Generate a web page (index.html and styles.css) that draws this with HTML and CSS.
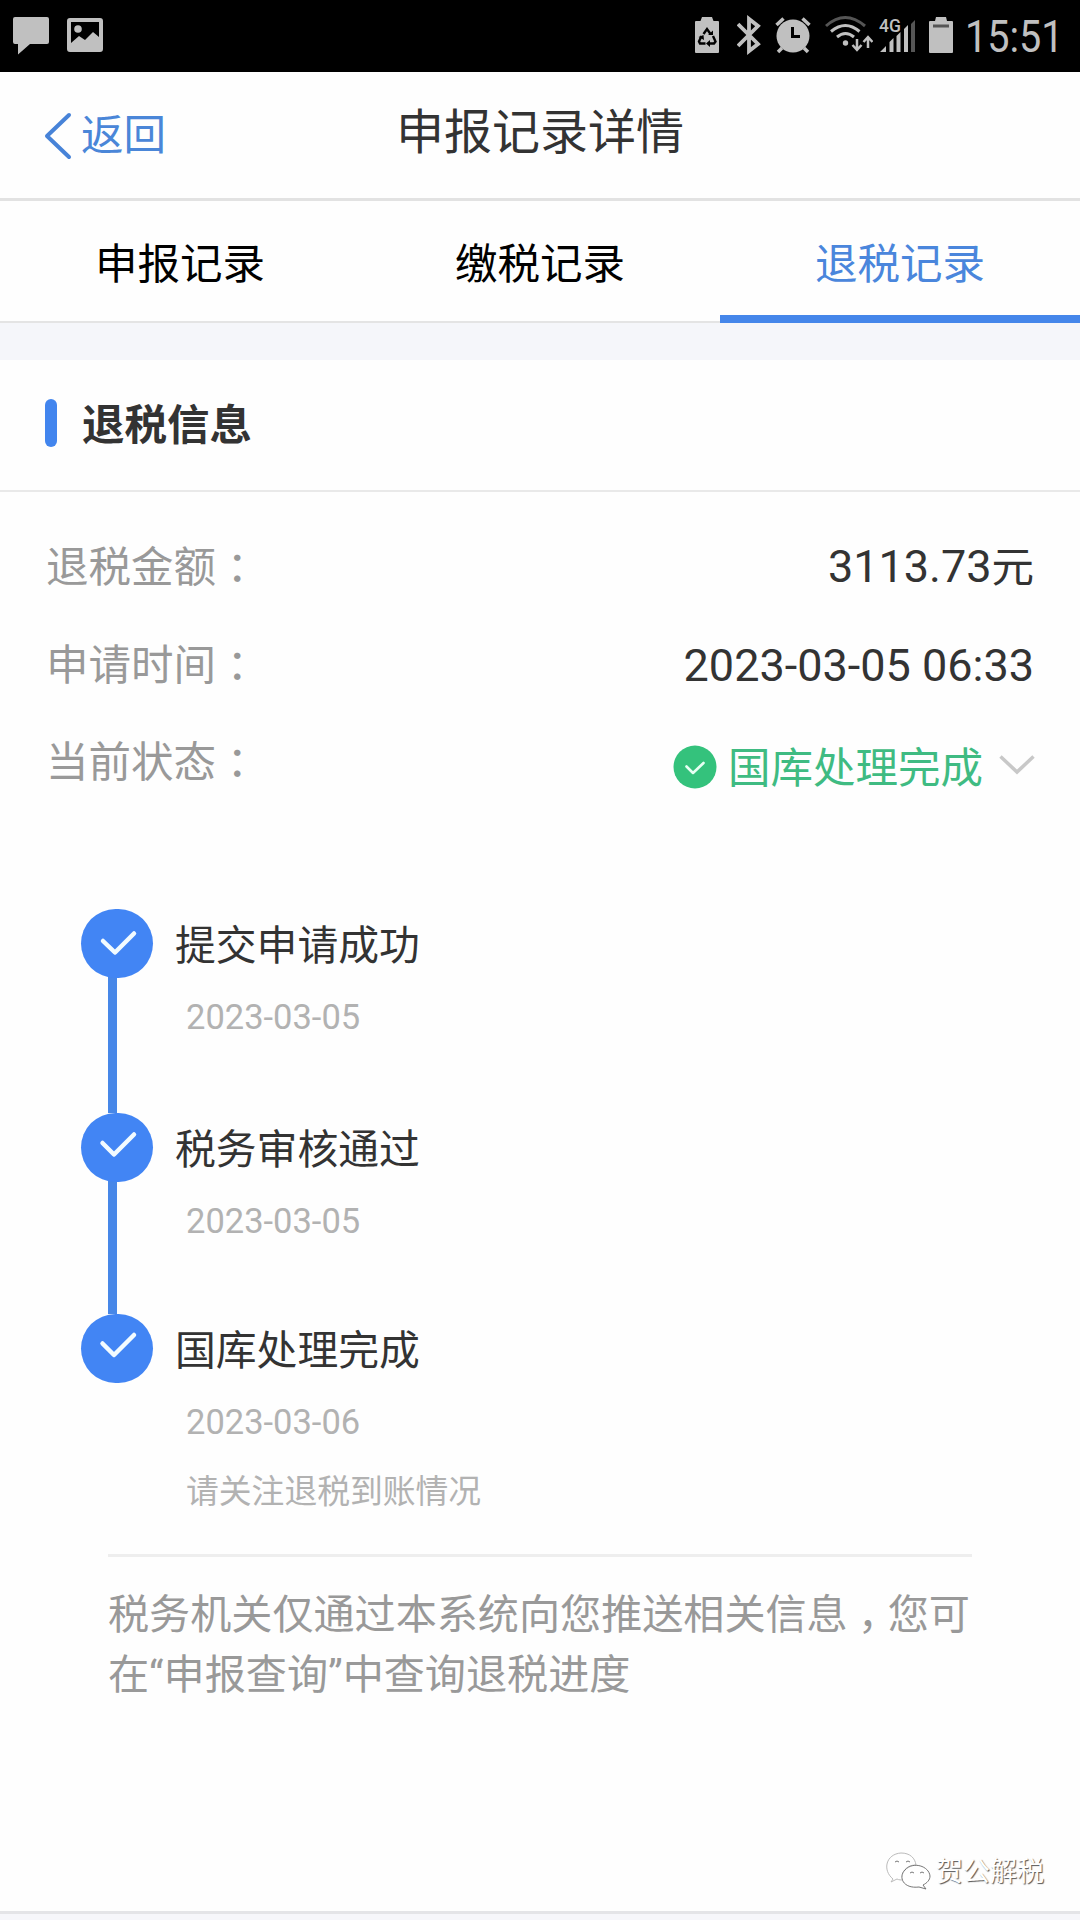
FILE: index.html
```html
<!DOCTYPE html>
<html lang="zh-CN">

<head>
    <meta charset="UTF-8">
    <meta name="viewport" content="width=device-width, initial-scale=1.0">
    <title>申报记录详情</title>
    <link rel="stylesheet" href="styles.css">
</head>

<body>

    <div class="status-bar">
        <svg class="icon-message" width="36" height="72" viewBox="0 0 36 72" fill="#c0c0c0">
            <path d="M2 17h32a2 2 0 0 1 2 2v23a2 2 0 0 1-2 2H17L5 54.500V44H2a2 2 0 0 1-2-2V19a2 2 0 0 1 2-2z"/>
        </svg>
        <svg class="icon-picture" width="36" height="72" viewBox="0 0 36 72" fill="#c0c0c0">
            <path fill-rule="evenodd" d="M3 18h30a3 3 0 0 1 3 3v28a3 3 0 0 1-3 3H3a3 3 0 0 1-3-3V21a3 3 0 0 1 3-3zM4 22v21l8-7 6 4 8-8 6 5V22z"/>
            <circle cx="11" cy="29" r="3.800"/>
        </svg>

        <div class="status-right">
            <svg class="icon-saver" width="24" height="72" viewBox="0 0 24 72">
                <path fill="#c0c0c0" d="M7 17h10l1.500 4H23a1 1 0 0 1 1 1v30a1 1 0 0 1-1 1H1a1 1 0 0 1-1-1V22a1 1 0 0 1 1-1h4.500z"/>
                <path d="M8.500 34l3.500-5 3.500 5M18 36l2.500 5.500-1.500 2h-5M10.500 43.500H5l-1-2L6.500 36" fill="none" stroke="#000" stroke-width="2.400"/>
                <path d="M13 35h5v-4.500zM15 40v7l-4-3.500zM3.500 37l5-2 .5 5z" fill="#000"/>
            </svg>
            <svg class="icon-bluetooth" width="24" height="72" viewBox="0 0 24 72" fill="none" stroke="#c0c0c0" stroke-width="3.800">
                <path d="M1 24l20 20-9 7V19l9 7L1 46"/>
            </svg>
            <svg class="icon-alarm" width="36" height="72" viewBox="0 0 36 72">
                <circle cx="18" cy="36" r="16.500" fill="#c0c0c0"/>
                <path d="M1.500 25l7-6.500M27.500 18.500l7 6.500M7 48l-4 4M29 48l4 4" fill="none" stroke="#c0c0c0" stroke-width="3.500"/>
                <path d="M17.500 27v9.500h7.500" fill="none" stroke="#000" stroke-width="3"/>
            </svg>
            <svg class="icon-wifi" width="48" height="72" viewBox="0 0 48 72" fill="none" stroke="#c0c0c0" stroke-width="3">
                <path d="M1 26q19-17 39 0" stroke="#555"/>
                <path d="M6 31.500q14.500-12 28.500 0M12 37q8.500-7 17 0"/>
                <circle cx="20.500" cy="43" r="2.700" fill="#c0c0c0" stroke="none"/>
                <path d="M32 39v10M27.500 45l4.500 5 4.500-5M43 48V38M38.500 42l4.500-5 4.500 5" stroke-width="2.500"/>
            </svg>
            <svg class="icon-signal" width="37" height="72" viewBox="0 0 37 72" fill="#c0c0c0">
                <text class="network" x="0" y="32">4G</text>
                <path d="M1 52l6-6v6zM10.500 42l4-4v14h-4zM17.500 36l4-4v20h-4zM25 29l4-4v27h-4z"/>
                <path d="M32 24l4-4v32h-4z" fill="#555"/>
            </svg>
            <svg class="icon-battery" width="24" height="72" viewBox="0 0 24 72">
                <path fill="#c0c0c0" d="M7 17h10l1 4h5a1 1 0 0 1 1 1v30a1 1 0 0 1-1 1H1a1 1 0 0 1-1-1V22a1 1 0 0 1 1-1h5z"/>
                <path d="M4 24.500h16v3H4z" fill="#555"/>
            </svg>
            <span class="time">15:51</span>
        </div>
    </div>

    <header class="header">
        <a class="back">
            <svg width="28" height="48" viewBox="0 0 28 48" fill="none" stroke="#4783d8" stroke-width="4" stroke-linecap="round" stroke-linejoin="round">
                <path d="M25 3L3 24l22 21"/>
            </svg>
            <span>返回</span>
        </a>
        <h1>申报记录详情</h1>
    </header>

    <nav class="tabs">
        <div class="tab">申报记录</div>
        <div class="tab">缴税记录</div>
        <div class="tab active">退税记录</div>
    </nav>

    <main class="content">
        <h2 class="section-title"><span>退税信息</span></h2>

        <div class="info">
            <div class="row">
                <span class="label">退税金额<span class="colon" lang="zh-TW">：</span></span>
                <span class="value">3113.73<span class="unit">元</span></span>
            </div>
            <div class="row">
                <span class="label">申请时间<span class="colon" lang="zh-TW">：</span></span>
                <span class="value">2023-03-05 06:33</span>
            </div>
            <div class="row">
                <span class="label">当前状态<span class="colon" lang="zh-TW">：</span></span>
                <span class="status">
                    <svg width="44" height="44" viewBox="0 0 44 44">
                        <circle cx="22" cy="22" r="21.500" fill="#34c27c"/>
                        <path d="M13.500 21.500l6.500 6.500L30.500 18" fill="none" stroke="#e6fff2" stroke-width="2.600" stroke-linecap="round" stroke-linejoin="round"/>
                    </svg>
                    <span class="status-text">国库处理完成</span>
                    <svg class="arrow" width="36" height="24" viewBox="0 0 36 24" fill="none" stroke="#c8c8c8" stroke-width="3.500">
                        <path d="M1.500 1.500L18 17 34.500 1.500"/>
                    </svg>
                </span>
            </div>
        </div>

        <div class="timeline">
            <div class="step">
                <div class="dot">
                    <svg width="72" height="69" viewBox="0 0 72 69"><path d="M22 32l12 11.500 19-19"/></svg>
                </div>
                <div class="step-text">
                    <h3>提交申请成功</h3>
                    <p class="date">2023-03-05</p>
                </div>
            </div>
            <div class="step">
                <div class="dot">
                    <svg width="72" height="69" viewBox="0 0 72 69"><path d="M21.500 30L33 41.500l20-20"/></svg>
                </div>
                <div class="step-text">
                    <h3>税务审核通过</h3>
                    <p class="date">2023-03-05</p>
                </div>
            </div>
            <div class="step">
                <div class="dot">
                    <svg width="72" height="69" viewBox="0 0 72 69"><path d="M21.500 29.500L33 41l20-20"/></svg>
                </div>
                <div class="step-text">
                    <h3>国库处理完成</h3>
                    <p class="date">2023-03-06</p>
                    <p class="note">请关注退税到账情况</p>
                </div>
            </div>
        </div>

        <p class="notice">税务机关仅通过本系统向您推送相关信息<span class="comma">，</span>您可在“申报查询”中查询退税进度</p>
    </main>

    <footer class="watermark">
        <svg width="46" height="42" viewBox="0 0 46 42" fill="#fff" stroke="#777" stroke-width="1">
            <path d="M8 29C-3 20 1 4 16 3c9 0 14 5 15 12-10 0-16 8-13 15-2 0-4 0-6-1l-6 3z" stroke="#bbb"/>
            <path d="M38 35l3 4-7-2C18 39 13 27 20 20c8-9 24-4 25 6 0 4-3 7-7 9z"/>
            <path d="M10 12q2-2 4 0M21 12q2-2 4 0M25 23q2-2 4 0M35 23q2-2 4 0" fill="none"/>
        </svg>
        <span>贺公解税</span>
    </footer>

</body>

</html>
```

FILE: styles.css
```css
* {
    box-sizing: border-box;
    margin: 0;
    padding: 0;
}

body {
    display: flex;
    flex-direction: column;
    height: 1920px;
    padding-bottom: 6px;
    background-color: #f6f6fa;
    color: #333;
    font-family: Roboto, "Noto Sans CJK SC", sans-serif;
    font-size: 42.5px;
    overflow: hidden;
}

svg {
    display: block;
    flex: none;
}

h1,
h2,
h3 {
    font-weight: normal;
}

/* status bar */

.status-bar {
    display: flex;
    flex: none;
    height: 72px;
    padding: 0 13px;
    background-color: #000;
    color: #c0c0c0;
}

.icon-picture {
    margin-left: 18px;
}

.status-right {
    display: flex;
    width: 372px;
    margin-left: auto;
}

.icon-bluetooth {
    margin-left: 18px;
}

.icon-alarm,
.icon-wifi {
    margin-left: 14px;
}

.icon-signal {
    margin-left: 6px;
}

.icon-battery {
    margin-left: 13px;
}

.network {
    font-size: 17.5px;
    font-weight: 500;
}

.time {
    margin-left: 12px;
    font-size: 44px;
    line-height: 74px;
    transform: scaleX(0.9);
    transform-origin: left;
}

/* header */

.header {
    display: grid;
    grid-template-columns: 1fr auto 1fr;
    flex: none;
    height: 129px;
    padding: 0 44px;
    border-bottom: 3px solid #e2e2e2;
    background-color: #fefefe;
}

.back {
    display: flex;
    align-items: center;
    gap: 9px;
    height: 127px;
    color: #4a86d8;
}

.back span {
    padding-bottom: 9px;
}

.header h1 {
    font-size: 48px;
    line-height: 122px;
}

/* tabs */

.tabs {
    display: flex;
    flex: none;
    height: 122px;
    border-bottom: 2px solid #e4e4e4;
    background-color: #fefefe;
}

.tab {
    flex: 1;
    height: 123px;
    color: #000;
    line-height: 127px;
    text-align: center;
}

.tab.active {
    border-bottom: 9px solid #4586ea;
    color: #4a86dc;
}

/* refund info */

.content {
    flex: 1;
    border-top: 37px solid #f5f6fa;
    border-bottom: 3px solid #e4e4e7;
    background-color: #fefefe;
}

.section-title {
    display: flex;
    align-items: center;
    gap: 25px;
    height: 132px;
    padding: 0 45px 4px;
    border-bottom: 2px solid #e9e9e9;
    font-size: 42.5px;
    font-weight: bold;
    line-height: 60px;
}

.section-title span {
    padding-top: 5px;
}

.section-title::before {
    content: "";
    width: 12px;
    height: 48px;
    border-radius: 6px;
    background-color: #4285ee;
}

.info {
    padding: 27px 46px 0;
}

.row {
    display: flex;
    justify-content: space-between;
    height: 98px;
    line-height: 98px;
}

.row:last-child {
    line-height: 96px;
}

.label {
    color: #999;
}

.colon {
    font-family: "Noto Sans CJK TC", sans-serif;
    line-height: 1;
    vertical-align: -2px;
}

.value {
    font-size: 45px;
}

.row:first-child .value {
    line-height: 96px;
}

.unit {
    font-size: 42.5px;
}

.status {
    display: flex;
    align-items: center;
    height: 104px;
    color: #3fbb82;
}

.status-text {
    margin: 0 16px 0 11px;
    padding-top: 3px;
}

.arrow {
    margin: 0 -1px 0 0;
}

/* timeline */

.timeline {
    padding: 96px 81px 0;
}

.step {
    display: flex;
    gap: 22px;
    height: 204px;
}

.step:nth-child(2) {
    height: 201px;
}

.step:last-child {
    height: 240px;
}

.dot {
    width: 72px;
    height: 100%;
    background: linear-gradient(#4787e8, #4787e8) 27px 36px / 9px 100% no-repeat;
}

.step:last-child .dot {
    background: none;
}

.dot svg {
    border-radius: 35px;
    background-color: #4285f4;
    fill: none;
    stroke: #f2fbff;
    stroke-width: 4.5;
    stroke-linecap: round;
    stroke-linejoin: round;
}

.step h3 {
    font-size: 40.8px;
    line-height: 75px;
}

.date {
    padding: 0 11px;
    color: #b2b2b2;
    font-size: 34.5px;
    line-height: 67px;
}

.note {
    padding: 0 11px;
    color: #b2b2b2;
    font-size: 32.8px;
    line-height: 72px;
}

.notice {
    width: 864px;
    margin-left: 108px;
    padding-top: 28px;
    border-top: 3px solid #eee;
    color: #999;
    font-size: 41.1px;
    line-height: 60px;
}

/* the comma sits in the middle of its cell */
.comma {
    display: inline-block;
    width: 40px;
    padding-left: 10px;
    line-height: 1;
}

.watermark {
    display: flex;
    justify-content: flex-end;
    flex: none;
    gap: 5px;
    height: 64px;
    margin-top: -64px;
    padding-right: 36px;
    color: #fff;
    font-size: 27px;
    line-height: 44px;
    text-shadow: 1px 1px 1px #555;
}
```
